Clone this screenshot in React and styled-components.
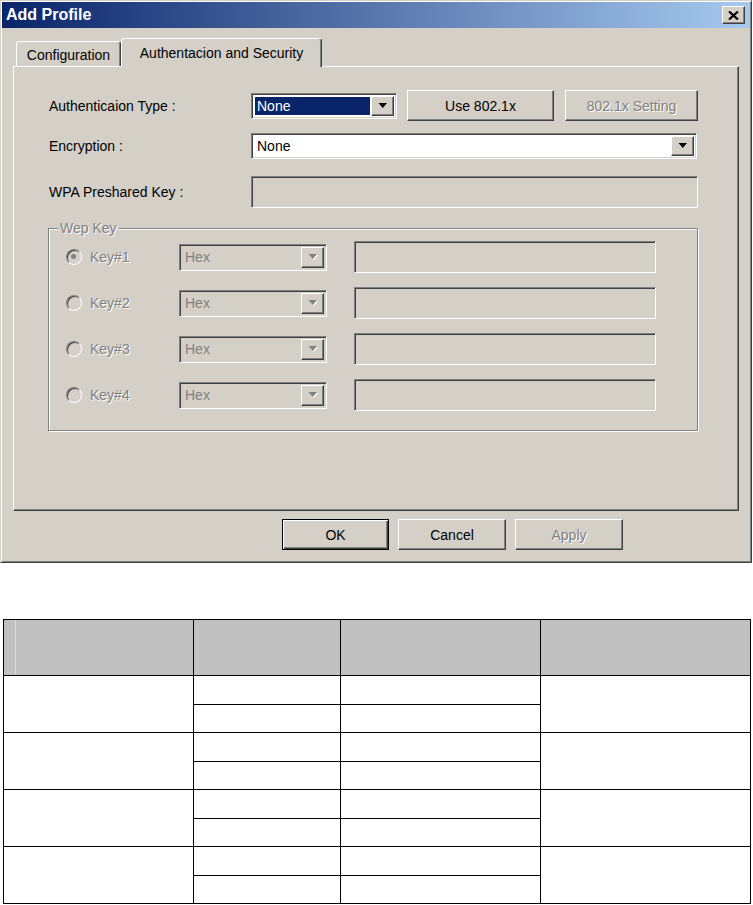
import React from "react";
import styled, { createGlobalStyle, css } from "styled-components";

const GlobalStyle = createGlobalStyle`
  html, body {
    margin: 0;
    padding: 0;
    background: #fff;
  }
  body {
    font-family: "Liberation Sans", Arial, sans-serif;
    font-size: 14px;
    color: #000;
  }
`;

const raised = css`
  box-sizing: border-box;
  border: 1px solid;
  border-color: #fff #404040 #404040 #fff;
  box-shadow: inset -1px -1px 0 #808080, inset 1px 1px 0 #d4d0c8;
  background: #d4d0c8;
`;

const sunken = css`
  box-sizing: border-box;
  border: 1px solid;
  border-color: #808080 #fff #fff #808080;
  box-shadow: inset 1px 1px 0 #404040, inset -1px -1px 0 #d4d0c8;
`;

const disabledText = css`
  color: #808080;
  text-shadow: 1px 1px 0 #fff;
`;

const Window = styled.div`
  box-sizing: border-box;
  width: 752px;
  height: 563px;
  padding: 1px;
  background: #d4d0c8;
  border: 1px solid;
  border-color: #d4d0c8 #404040 #404040 #d4d0c8;
  box-shadow: inset 1px 1px 0 #fff, inset -1px -1px 0 #808080;
  display: flex;
  flex-direction: column;
`;

const TitleBar = styled.div`
  height: 26px;
  display: flex;
  align-items: center;
  justify-content: space-between;
  padding: 0 5px 0 4px;
  background: linear-gradient(to right, #0a246a, #a6caf0);
`;

const Title = styled.span`
  color: #fff;
  font-weight: bold;
  font-size: 16px;
`;

const CloseBtn = styled.div`
  ${raised};
  width: 23px;
  height: 18px;
  display: flex;
  align-items: center;
  justify-content: center;
`;

const TabRow = styled.div`
  position: relative;
  z-index: 1;
  display: flex;
  align-items: flex-end;
  height: 28px;
  margin: 10px 0 0 14px;
`;

const Tab = styled.div`
  box-sizing: border-box;
  width: ${(p) => p.$width}px;
  height: ${(p) => (p.$active ? 29 : 25)}px;
  margin-bottom: ${(p) => (p.$active ? -1 : 0)}px;
  padding-top: ${(p) => (p.$active ? 6 : 5)}px;
  text-align: center;
  background: #d4d0c8;
  border: 1px solid;
  border-bottom: none;
  border-color: #fff #404040 transparent #fff;
  box-shadow: inset -1px 0 0 #808080;
  border-radius: 3px 3px 0 0;
  line-height: 16px;
`;

const Panel = styled.div`
  box-sizing: border-box;
  width: 726px;
  height: 445px;
  margin-left: 11px;
  padding: 23px 0 0 35px;
  border: 1px solid;
  border-color: #fff #404040 #404040 #fff;
  box-shadow: inset -1px -1px 0 #808080;
`;

const FormRow = styled.div`
  display: flex;
  align-items: center;
  height: ${(p) => p.$height}px;
  margin-top: ${(p) => p.$top || 0}px;
`;

const Label = styled.span`
  width: 202px;
  flex-shrink: 0;
`;

const Combo = styled.div`
  ${sunken};
  width: ${(p) => p.$width}px;
  height: ${(p) => p.$height}px;
  margin-right: ${(p) => p.$gap || 0}px;
  padding: 2px;
  display: flex;
  flex-shrink: 0;
  background: ${(p) => (p.$disabled ? "#d4d0c8" : "#fff")};
`;

const ComboValue = styled.div`
  flex: 1;
  display: flex;
  align-items: center;
  margin: 1px;
  padding-left: 2px;
  background: ${(p) => (p.$selected ? "#0a246a" : "transparent")};
  color: ${(p) => (p.$selected ? "#fff" : p.$disabled ? "#808080" : "#000")};
`;

const ArrowBtn = styled.div`
  ${raised};
  width: 23px;
  display: flex;
  align-items: center;
  justify-content: center;
`;

const Button = styled.div`
  box-sizing: border-box;
  width: ${(p) => p.$width}px;
  height: 31px;
  margin-right: ${(p) => p.$gap || 0}px;
  display: flex;
  align-items: center;
  justify-content: center;
  flex-shrink: 0;
  background: #d4d0c8;
  border: 1px solid;
  border-color: ${(p) => (p.$default ? "#000" : "#fff #404040 #404040 #fff")};
  box-shadow: ${(p) =>
    p.$default
      ? "inset 1px 1px 0 #fff, inset -1px -1px 0 #404040, inset -2px -2px 0 #808080"
      : "inset -1px -1px 0 #808080, inset 1px 1px 0 #d4d0c8"};
  ${(p) => p.$disabled && disabledText};
`;

const Field = styled.div`
  ${sunken};
  width: ${(p) => p.$width}px;
  height: 32px;
  background: #d4d0c8;
`;

const Group = styled.div`
  position: relative;
  box-sizing: border-box;
  width: 650px;
  height: 203px;
  margin: 20px 0 0 -1px;
  padding: 12px 0 0 17px;
  border: 1px solid #808080;
  box-shadow: inset 1px 1px 0 #fff, 1px 1px 0 #fff;
  display: flex;
  flex-direction: column;
  gap: 14px;
`;

const Legend = styled.span`
  position: absolute;
  top: -9px;
  left: 9px;
  padding: 0 2px;
  line-height: 16px;
  background: #d4d0c8;
  ${disabledText};
`;

const KeyRow = styled.div`
  display: flex;
  align-items: center;
  height: 32px;
`;

const Radio = styled.span`
  position: relative;
  box-sizing: border-box;
  width: 16px;
  height: 16px;
  margin-right: 8px;
  flex-shrink: 0;
  border-radius: 50%;
  border: 1px solid;
  border-color: #808080 #fff #fff #808080;
  box-shadow: inset 1px 1px 0 #404040;
  background: #d4d0c8;

  &::after {
    content: "";
    display: ${(p) => (p.$checked ? "block" : "none")};
    position: absolute;
    left: 4px;
    top: 4px;
    width: 5px;
    height: 5px;
    border-radius: 50%;
    background: #808080;
  }
`;

const KeyLabel = styled.span`
  width: 89px;
  flex-shrink: 0;
  ${disabledText};
`;

const ButtonRow = styled.div`
  display: flex;
  margin-top: 8px;
  padding-left: 280px;
`;

const Table = styled.table`
  border-collapse: collapse;
  table-layout: fixed;
  width: 748px;
  margin: 56px 0 0 3px;
`;

const HeadCell = styled.th`
  height: 55px;
  padding: 0;
  border: 1px solid #000;
  background: #c0c0c0;
  box-shadow: ${(p) => (p.$first ? "inset 11px 0 0 #c0c0c0, inset 12px 0 0 #dcdcdc" : "none")};
`;

const Cell = styled.td`
  height: ${(p) => p.$height}px;
  padding: 0;
  border: 1px solid #000;
`;

function Arrow({ disabled }) {
  return (
    <svg width="10" height="6" viewBox="0 0 10 6">
      {disabled && <polygon points="1.5,1 10,1 5.75,6" fill="#fff" />}
      <polygon points="0.5,0 9,0 4.75,5" fill={disabled ? "#808080" : "#000"} />
    </svg>
  );
}

function Select({ width, height, value, selected, disabled, gap }) {
  return (
    <Combo $width={width} $height={height} $disabled={disabled} $gap={gap}>
      <ComboValue $selected={selected} $disabled={disabled}>
        {value}
      </ComboValue>
      <ArrowBtn>
        <Arrow disabled={disabled} />
      </ArrowBtn>
    </Combo>
  );
}

const keys = ["Key#1", "Key#2", "Key#3", "Key#4"];

const groups = [0, 1, 2, 3];

export default function App() {
  return (
    <>
      <GlobalStyle />
      <Window>
        <TitleBar>
          <Title>Add Profile</Title>
          <CloseBtn>
            <svg width="11" height="9" viewBox="0 0 11 9">
              <path d="M1 0.5 L10 8.5 M10 0.5 L1 8.5" stroke="#000" strokeWidth="2.2" />
            </svg>
          </CloseBtn>
        </TitleBar>

        <TabRow>
          <Tab $width={105}>Configuration</Tab>
          <Tab $width={201} $active>
            Authentacion and Security
          </Tab>
        </TabRow>

        <Panel>
          <FormRow $height={31}>
            <Label>Authenticaion Type :</Label>
            <Select width={146} height={26} value="None" selected gap={10} />
            <Button $width={147} $gap={11}>
              Use 802.1x
            </Button>
            <Button $width={133} $disabled>
              802.1x Setting
            </Button>
          </FormRow>

          <FormRow $height={26} $top={12}>
            <Label>Encryption :</Label>
            <Select width={446} height={26} value="None" />
          </FormRow>

          <FormRow $height={32} $top={17}>
            <Label>WPA Preshared Key :</Label>
            <Field $width={447} />
          </FormRow>

          <Group>
            <Legend>Wep Key</Legend>
            {keys.map((k, i) => (
              <KeyRow key={k}>
                <Radio $checked={i === 0} />
                <KeyLabel>{k}</KeyLabel>
                <Select width={148} height={27} value="Hex" disabled gap={27} />
                <Field $width={302} />
              </KeyRow>
            ))}
          </Group>
        </Panel>

        <ButtonRow>
          <Button $width={107} $gap={9} $default>
            OK
          </Button>
          <Button $width={108} $gap={9}>
            Cancel
          </Button>
          <Button $width={108} $disabled>
            Apply
          </Button>
        </ButtonRow>
      </Window>

      <Table>
        <colgroup>
          <col style={{ width: 190 }} />
          <col style={{ width: 147 }} />
          <col style={{ width: 200 }} />
          <col style={{ width: 210 }} />
        </colgroup>
        <thead>
          <tr>
            <HeadCell $first />
            <HeadCell />
            <HeadCell />
            <HeadCell />
          </tr>
        </thead>
        <tbody>
          {groups.map((g) => (
            <React.Fragment key={g}>
              <tr>
                <Cell rowSpan={2} />
                <Cell $height={28} />
                <Cell $height={28} />
                <Cell rowSpan={2} />
              </tr>
              <tr>
                <Cell $height={27} />
                <Cell $height={27} />
              </tr>
            </React.Fragment>
          ))}
        </tbody>
      </Table>
    </>
  );
}
